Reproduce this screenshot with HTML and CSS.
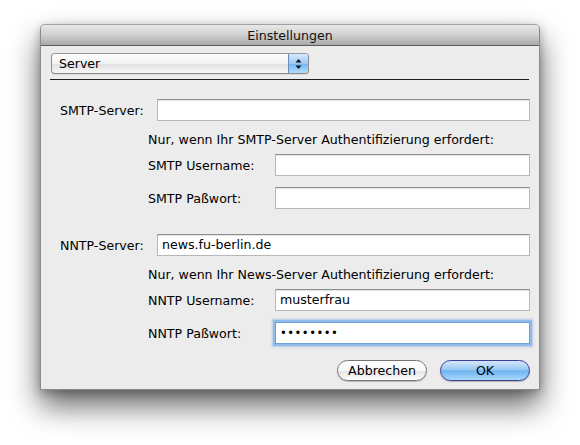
FILE: index.html
```html
<!DOCTYPE html>
<html lang="de">
<head>
<meta charset="utf-8">
<title>Einstellungen</title>
<link rel="stylesheet" href="styles.css">
</head>
<body>
<div class="page">
  <div class="window">
    <div class="titlebar">Einstellungen</div>
    <div class="content">
      <div class="popup">
        <span class="popup-label">Server</span>
        <span class="stepper">
          <svg width="7" height="12" viewBox="0 0 7 12"><path d="M3.5 1 L6.5 4.5 L0.5 4.5 Z" fill="#111"/><path d="M3.5 11 L6.5 7.5 L0.5 7.5 Z" fill="#111"/></svg>
        </span>
      </div>
      <div class="separator"></div>

      <div class="section first">
        <div class="row main">
          <span class="label">SMTP-Server:</span>
          <span class="field"></span>
        </div>
        <div class="note">Nur, wenn Ihr SMTP-Server Authentifizierung erfordert:</div>
        <div class="row sub">
          <span class="label">SMTP Username:</span>
          <span class="field"></span>
        </div>
        <div class="row sub gap">
          <span class="label">SMTP Paßwort:</span>
          <span class="field"></span>
        </div>
      </div>

      <div class="section second">
        <div class="row main">
          <span class="label">NNTP-Server:</span>
          <span class="field">news.fu-berlin.de</span>
        </div>
        <div class="note">Nur, wenn Ihr News-Server Authentifizierung erfordert:</div>
        <div class="row sub">
          <span class="label">NNTP Username:</span>
          <span class="field">musterfrau</span>
        </div>
        <div class="row sub gap">
          <span class="label">NNTP Paßwort:</span>
          <span class="field focused dots">••••••••</span>
        </div>
      </div>

      <div class="buttons">
        <span class="button cancel">Abbrechen</span>
        <span class="button ok">OK</span>
      </div>
    </div>
  </div>
</div>
</body>
</html>
```
FILE: styles.css
```css
html, body {
  margin: 0;
  background: #ffffff;
}
body {
  font-family: "DejaVu Sans", "Liberation Sans", sans-serif;
  font-size: 12.6px;
  color: #000;
  min-height: 445px;
}
.page {
  padding: 24px 0 55px 40px;
}
.window {
  box-sizing: border-box;
  width: 500px;
  height: 366px;
  background: #ececec;
  border: 1px solid #8b8b8b;
  border-top-color: #a0a0a0;
  border-radius: 5px 5px 0 0;
  box-shadow: 0 16px 30px rgba(0,0,0,0.6), 0 3px 10px rgba(0,0,0,0.25);
  display: flex;
  flex-direction: column;
}
.titlebar {
  height: 20px;
  border-bottom: 1px solid #5e5e5e;
  background: linear-gradient(#e8e8e8, #d0d0d0 50%, #a9a9a9);
  text-align: center;
  line-height: 21px;
  color: #111;
  border-radius: 4px 4px 0 0;
}
.content {
  padding: 7px 9px 0 10px;
  display: flex;
  flex-direction: column;
}
.popup {
  width: 256px;
  height: 19px;
  border: 1px solid #8c8c8c;
  border-top-color: #9a9a9a;
  border-radius: 4px;
  background: linear-gradient(#ffffff, #f2f2f2 50%, #e2e2e2 55%, #f6f6f6);
  display: flex;
  align-items: center;
  box-shadow: 0 1px 0 rgba(0,0,0,0.08);
  overflow: hidden;
}
.popup-label {
  flex: 1;
  padding-left: 7px;
}
.stepper {
  width: 19px;
  height: 19px;
  border-left: 1px solid #6b8ab5;
  background: linear-gradient(#d6eafd, #9ccaf5 50%, #72b5f2 52%, #b2defd);
  display: flex;
  align-items: center;
  justify-content: center;
}
.separator {
  margin: 5px 1px 0 -1px;
  height: 1px;
  background: #1e1e1e;
}
.section.first {
  margin-top: 19px;
}
.section.second {
  margin-top: 25px;
}
.row {
  display: flex;
  align-items: center;
  height: 22px;
}
.row .label {
  flex: none;
}
.row.main .label {
  width: 97px;
  padding-left: 9px;
}
.row.sub {
  margin-top: 6px;
  padding-left: 97px;
}
.row.sub .label {
  width: 127px;
}
.row.sub.gap {
  margin-top: 11px;
}
.field {
  flex: 1;
  box-sizing: border-box;
  height: 22px;
  background: #fff;
  border: 1px solid #b8b8b8;
  border-top-color: #8f8f8f;
  box-shadow: inset 0 1px 0 #e4e4e4;
  padding: 0 4px;
  line-height: 20px;
}
.field.focused {
  border: 1px solid #6f9fd6;
  box-shadow: 0 0 0 2px #8fbbea, 0 0 2px 3px rgba(120,170,230,0.5);
}
.field.dots {
  font-size: 11.5px;
  letter-spacing: 0.5px;
}
.note {
  margin-top: 11px;
  padding-left: 97px;
  height: 16px;
  line-height: 16px;
}
.buttons {
  margin-top: 16px;
  display: flex;
  justify-content: flex-end;
  gap: 13px;
}
.button {
  width: 88px;
  height: 19px;
  border-radius: 11px;
  text-align: center;
  line-height: 19px;
}
.button.cancel {
  border: 1px solid #757575;
  background: linear-gradient(#ffffff, #f7f7f7 50%, #e6e6e6 55%, #fbfbfb);
  box-shadow: 0 1px 1px rgba(0,0,0,0.2);
}
.button.ok {
  border: 1px solid #3b3f9a;
  background: linear-gradient(#d4e8fc, #99c9f3 45%, #6fb2ef 52%, #a8dafd);
  box-shadow: 0 1px 1px rgba(0,0,0,0.25);
}
```
